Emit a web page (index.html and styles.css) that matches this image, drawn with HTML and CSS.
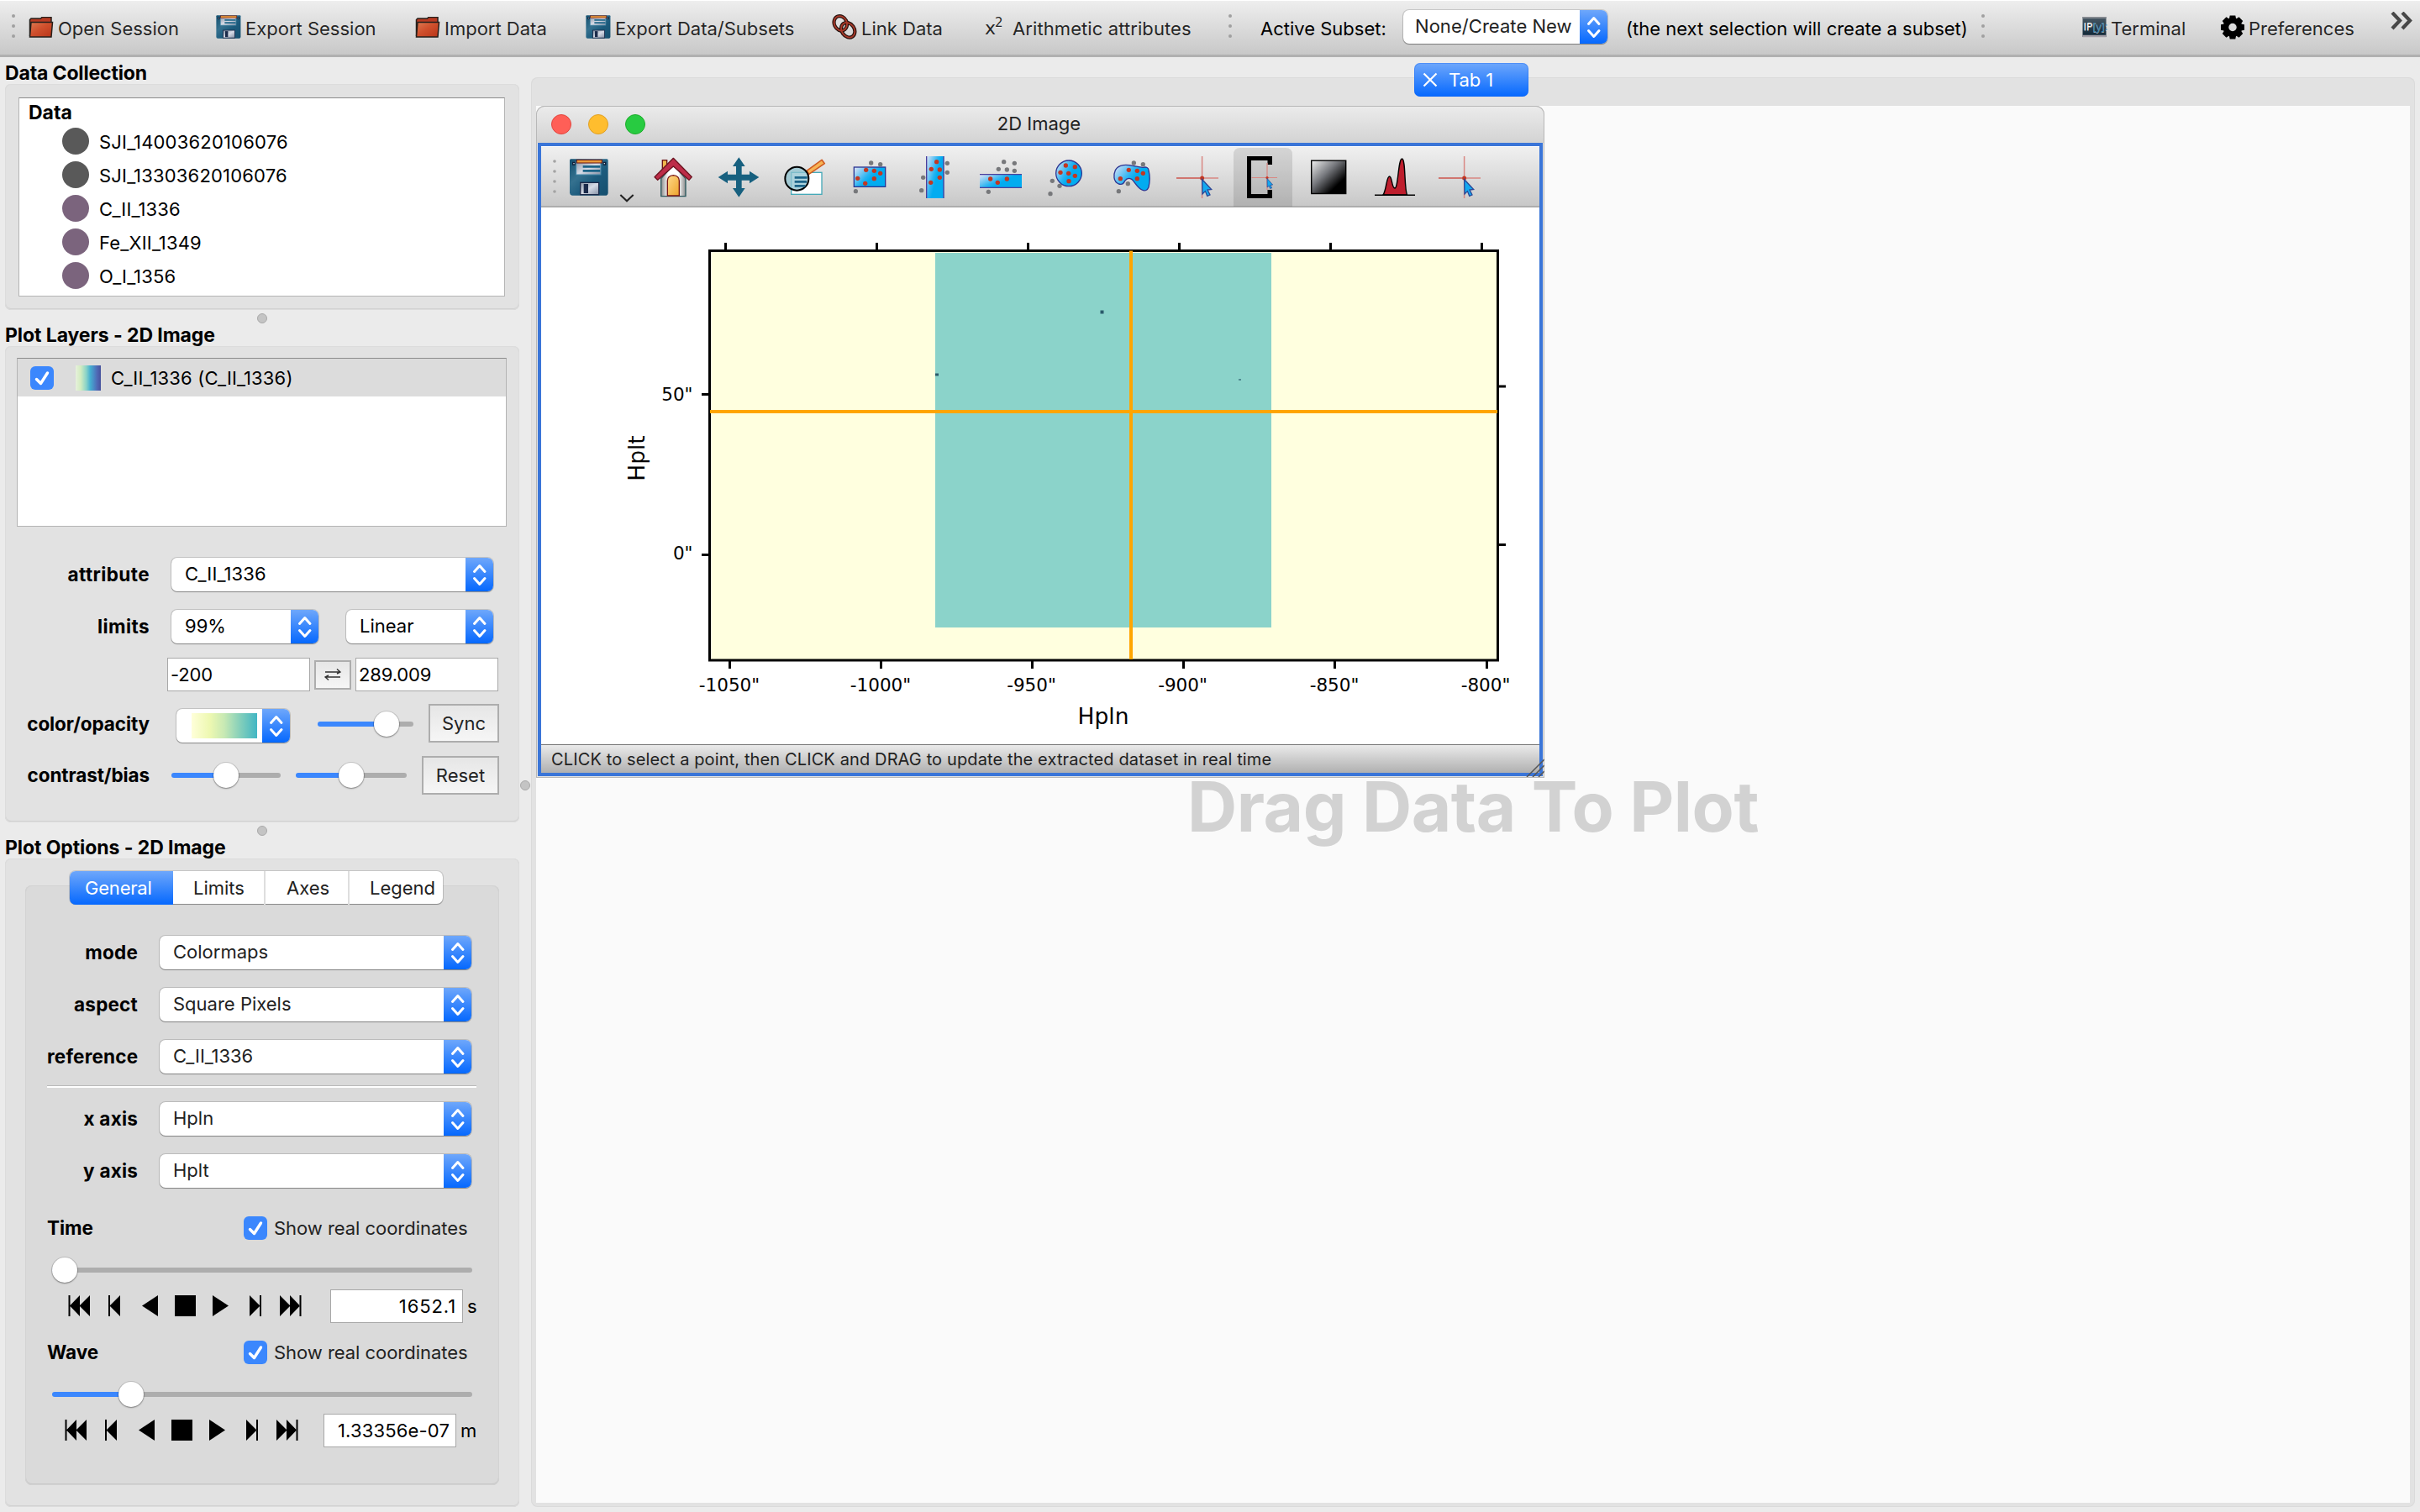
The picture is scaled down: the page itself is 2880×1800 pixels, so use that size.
FILE: index.html
```html
<!DOCTYPE html>
<html lang="en">
<head>
<meta charset="utf-8">
<title>Glue</title>
<link rel="stylesheet" href="styles.css">
</head>
<body>
<svg class="defs" width="0" height="0">
  <defs>
    <linearGradient id="g-folder" x1="0" y1="0" x2="1" y2="1"><stop offset="0" stop-color="#dd7a52"/><stop offset=".45" stop-color="#d0502d"/><stop offset="1" stop-color="#b83418"/></linearGradient>
    <linearGradient id="g-floppy" x1="0" y1="0" x2="1" y2="1"><stop offset="0" stop-color="#14506f"/><stop offset=".35" stop-color="#35718f"/><stop offset=".6" stop-color="#1c5b7d"/><stop offset="1" stop-color="#154f6e"/></linearGradient>
    <linearGradient id="g-metal" x1="0" y1="0" x2="1" y2="1"><stop offset="0" stop-color="#8d98a8"/><stop offset=".5" stop-color="#d6dbe6"/><stop offset="1" stop-color="#8490a4"/></linearGradient>
    <linearGradient id="g-gold" x1="0" y1="0" x2="1" y2="1"><stop offset="0" stop-color="#ffd98a"/><stop offset="1" stop-color="#eda32b"/></linearGradient>
    <linearGradient id="g-wall"><stop offset="0" stop-color="#8c8c8c"/><stop offset=".3" stop-color="#fff"/><stop offset=".7" stop-color="#fff"/><stop offset="1" stop-color="#8c8c8c"/></linearGradient>
    <linearGradient id="g-sel" x1="0" y1="0" x2="1" y2=".6"><stop offset="0" stop-color="#e6e4f5"/><stop offset=".5" stop-color="#29b4f2"/><stop offset=".65" stop-color="#02acf0"/><stop offset="1" stop-color="#02acf0"/></linearGradient>
    <linearGradient id="g-gray" x1="0" y1="0" x2="1" y2="1"><stop offset="0" stop-color="#f2f2f2"/><stop offset=".4" stop-color="#77797e"/><stop offset=".75" stop-color="#000"/></linearGradient>
    <linearGradient id="g-term" x1="0" y1="0" x2="0" y2="1"><stop offset="0" stop-color="#4a5a66"/><stop offset="1" stop-color="#0c2434"/></linearGradient>
    <symbol id="folder" viewBox="0 0 29 25">
      <path d="M1 23V3.500L2.500 2H14l1.500-1.500h11V9" fill="#b83a22" stroke="#26201c" stroke-width="1.500"/>
      <path d="M2.500 6.500h25.500L26.500 24H1z" fill="url(#g-folder)" stroke="#26201c" stroke-width="1.500"/>
    </symbol>
    <symbol id="floppy" viewBox="84 39 138 132">
      <path d="M88 40H217q4 0 4 5V162q-1 6-6 8H92q-7-2-8-9V45q0-5 4-5z" fill="url(#g-floppy)"/>
      <rect x="107" y="50" width="88" height="46" fill="url(#g-metal)" stroke="#3f87a8" stroke-width="3"/>
      <rect x="109" y="43" width="90" height="11" fill="#e89a3a" stroke="#6b1414" stroke-width="3"/>
      <path d="M131 63h62v8h-62zM131 78h62v8h-62z" fill="#1c6488"/>
      <path d="M93 50h11v12H93zM203 50h11v12h-11z" fill="#12233c"/>
      <path d="M97 54h4v4h-4zM206 54h4v4h-4z" fill="#cfd8e2"/>
      <rect x="122" y="124" width="66" height="43" fill="url(#g-metal)" stroke="#1b2a4a" stroke-width="4"/>
      <rect x="134" y="129" width="16" height="33" fill="#1b2a4a"/>
    </symbol>
    <symbol id="updown" viewBox="0 0 33 40">
      <path d="M10.500 16.500L16.800 9.500L23 16.500M10.500 24.500L16.800 31.500L23 24.500" fill="none" stroke="#fff" stroke-width="3" stroke-linecap="round" stroke-linejoin="round"/>
    </symbol>
    <symbol id="check" viewBox="0 0 28 28"><path d="M7.500 15.500L12.500 20.500L20.500 8" fill="none" stroke="#fff" stroke-width="3.400" stroke-linecap="round" stroke-linejoin="round"/></symbol>
    <symbol id="pick" viewBox="0 0 78 72">
      <path d="M44.600 12v50M14 38h50" stroke="#d98883" stroke-width="1.500"/><path d="M14 38h28" stroke="#cc6a63" stroke-width="1.500"/>
      <circle cx="44.600" cy="38" r="2.500" fill="#c23722"/>
      <path d="M44.600 39.500L55.700 51.500L51 52L54 58L50.700 59.300L48.400 53.600L45 57z" fill="#13a9f0" stroke="#2a4797" stroke-width="1.300"/>
    </symbol>
    <symbol id="first" viewBox="0 0 26 25"><path d="M.5 0h2v25h-2zM14 0v25L2 12.500zM26 0v25L13.500 12.500z"/></symbol>
    <symbol id="prev" viewBox="0 0 14 25"><path d="M0 0h2v25H0zM14 0v25L1.500 12.500z"/></symbol>
    <symbol id="back" viewBox="0 0 19 25"><path d="M19 0v25L0 12.500z"/></symbol>
    <symbol id="stop" viewBox="0 0 25 25"><path d="M0 0h25v25H0z"/></symbol>
    <symbol id="play" viewBox="0 0 19 25"><path d="M0 0v25L19 12.500z"/></symbol>
    <symbol id="next" viewBox="0 0 14 25"><path d="M12 0h2v25h-2zM0 0v25L12.500 12.500z"/></symbol>
    <symbol id="last" viewBox="0 0 26 25"><path d="M23.500 0h2v25h-2zM12 0v25L24 12.500zM0 0v25L12.500 12.500z"/></symbol>
  </defs>
</svg>

<header class="toolbar">
  <span class="grip"><i></i><i></i><i></i></span>
  <span class="action"><svg class="ic" width="29" height="25"><use href="#folder"/></svg>Open Session</span>
  <span class="action"><svg class="ic" width="30" height="28"><use href="#floppy"/></svg>Export Session</span>
  <span class="action"><svg class="ic" width="29" height="25"><use href="#folder"/></svg>Import Data</span>
  <span class="action"><svg class="ic" width="30" height="28"><use href="#floppy"/></svg>Export Data/Subsets</span>
  <span class="action"><svg class="ic" width="32" height="32" viewBox="0 0 32 32"><g fill="none"><g stroke="#26120e" stroke-width="4.500"><ellipse cx="11" cy="11.500" rx="8" ry="9.500" transform="rotate(-25 11 11.500)"/><ellipse cx="20.500" cy="20" rx="8" ry="10" transform="rotate(-35 20.500 20)"/></g><g stroke="#a8392a" stroke-width="2"><ellipse cx="11" cy="11.500" rx="8" ry="9.500" transform="rotate(-25 11 11.500)"/><ellipse cx="20.500" cy="20" rx="8" ry="10" transform="rotate(-35 20.500 20)"/></g></g></svg>Link Data</span>
  <span class="action wide"><span class="formula">x<sup>2</sup></span>Arithmetic attributes</span>
  <span class="grip"><i></i><i></i><i></i></span>
  <span class="plain">Active Subset:</span>
  <span class="combo top">None/Create New<b class="step"><svg width="33" height="40"><use href="#updown"/></svg></b></span>
  <span class="plain">(the next selection will create a subset)</span>
  <span class="grip"><i></i><i></i><i></i></span>
  <span class="action tight"><svg class="ic" width="29" height="25" viewBox="0 0 29 25"><rect width="28" height="24" fill="url(#g-term)"/><path d="M0 1h28" stroke="#84898f" stroke-width="2"/><path d="M0 23h28" stroke="#a5a0a8" stroke-width="2.500"/><text x="1" y="16" font-size="12.500" fill="#fff" font-family="Open Sans, sans-serif">IP<tspan fill="#3f86b0">[y]:</tspan></text></svg>Terminal</span>
  <span class="action tight"><svg class="ic" width="29" height="29" viewBox="-14.500 -14.500 29 29"><circle r="8" fill="none" stroke="#000" stroke-width="6.500"/><path d="M-3.300-14h6.600l1 5h-8.600zM-3.300 14h6.600l1-5h-8.600zM-14-3.300v6.600l5 1v-8.600zM14-3.300v6.600l-5 1v-8.600z"/><path transform="rotate(45)" d="M-3.300-14h6.600l1 5h-8.600zM-3.300 14h6.600l1-5h-8.600zM-14-3.300v6.600l5 1v-8.600zM14-3.300v6.600l-5 1v-8.600z"/></svg>Preferences</span>
  <span class="more"><svg width="28" height="22" viewBox="0 0 28 22"><path d="M2 1l9 9.500L2 20M14 1l9 9.500L14 20" fill="none" stroke="#484848" stroke-width="4.200"/></svg></span>
</header>

<div class="workspace">
<aside class="side">
  <h2 class="title first">Data Collection</h2>
  <section class="panel collection">
    <div class="tree">
      <div class="root">Data</div>
      <div class="leaf"><i class="dot gray"></i>SJI_14003620106076</div>
      <div class="leaf"><i class="dot gray"></i>SJI_13303620106076</div>
      <div class="leaf"><i class="dot"></i>C_II_1336</div>
      <div class="leaf"><i class="dot"></i>Fe_XII_1349</div>
      <div class="leaf"><i class="dot"></i>O_I_1356</div>
    </div>
  </section>
  <div class="split"><i></i></div>
  <h2 class="title">Plot Layers - 2D Image</h2>
  <section class="panel layers">
    <div class="layerlist">
      <div class="layer"><span class="cb"><svg width="28" height="28"><use href="#check"/></svg></span><i class="swatch"></i>C_II_1336 (C_II_1336)</div>
    </div>
    <div class="row"><label class="loose">attribute</label><span class="combo w383 list">C_II_1336<b class="step"><svg width="33" height="40"><use href="#updown"/></svg></b></span></div>
    <div class="row"><label class="loose">limits</label><span class="combo w175">99%<b class="step"><svg width="33" height="40"><use href="#updown"/></svg></b></span><span class="combo w175 second">Linear<b class="step"><svg width="33" height="40"><use href="#updown"/></svg></b></span></div>
    <div class="row range"><span class="input">-200</span><span class="button swap"><svg width="20" height="14" viewBox="0 0 20 14"><path d="M1 4h18M15 .5L19 4l-4 2M19 10H1M5 8l-4 2 4 3.500" fill="none" stroke="#333" stroke-width="1.400"/></svg></span><span class="input">289.009</span></div>
    <div class="row color"><label>color/opacity</label><span class="combo w135"><i class="cmap"></i><b class="step"><svg width="33" height="40"><use href="#updown"/></svg></b></span><span class="slider opacity"><i class="track" style="--p:72%"></i><i class="knob" style="--p:72%"></i></span><span class="button sync">Sync</span></div>
    <div class="row contrast"><label>contrast/bias</label><span class="slider c1"><i class="track" style="--p:50%"></i><i class="knob" style="--p:50%"></i></span><span class="slider c2"><i class="track" style="--p:50%"></i><i class="knob" style="--p:50%"></i></span><span class="button reset">Reset</span></div>
  </section>
  <div class="split"><i></i></div>
  <h2 class="title">Plot Options - 2D Image</h2>
  <section class="panel options">
    <nav class="tabs"><span class="on">General</span><span>Limits</span><span>Axes</span><span>Legend</span></nav>
    <div class="page">
      <div class="row"><label>mode</label><span class="combo w371">Colormaps<b class="step"><svg width="33" height="40"><use href="#updown"/></svg></b></span></div>
      <div class="row"><label>aspect</label><span class="combo w371">Square Pixels<b class="step"><svg width="33" height="40"><use href="#updown"/></svg></b></span></div>
      <div class="row"><label>reference</label><span class="combo w371">C_II_1336<b class="step"><svg width="33" height="40"><use href="#updown"/></svg></b></span></div>
      <hr>
      <div class="row"><label>x axis</label><span class="combo w371">Hpln<b class="step"><svg width="33" height="40"><use href="#updown"/></svg></b></span></div>
      <div class="row"><label>y axis</label><span class="combo w371">Hplt<b class="step"><svg width="33" height="40"><use href="#updown"/></svg></b></span></div>
      <div class="axis time">
        <div class="head"><strong>Time</strong><span class="cb"><svg width="28" height="28"><use href="#check"/></svg></span>Show real coordinates</div>
        <div class="slide"><span class="slider"><i class="track" style="--p:3%"></i><i class="knob" style="--p:3%"></i></span></div>
        <div class="transport">
          <span class="keys"><svg width="26" height="25"><use href="#first"/></svg><svg width="14" height="25"><use href="#prev"/></svg><svg width="19" height="25"><use href="#back"/></svg><svg width="25" height="25"><use href="#stop"/></svg><svg width="19" height="25"><use href="#play"/></svg><svg width="14" height="25"><use href="#next"/></svg><svg width="26" height="25"><use href="#last"/></svg></span>
          <span class="input num spaced">1652.1</span><span>s</span>
        </div>
      </div>
      <div class="axis wave">
        <div class="head"><strong>Wave</strong><span class="cb"><svg width="28" height="28"><use href="#check"/></svg></span>Show real coordinates</div>
        <div class="slide"><span class="slider"><i class="track" style="--p:18.800%"></i><i class="knob" style="--p:18.800%"></i></span></div>
        <div class="transport">
          <span class="keys"><svg width="26" height="25"><use href="#first"/></svg><svg width="14" height="25"><use href="#prev"/></svg><svg width="19" height="25"><use href="#back"/></svg><svg width="25" height="25"><use href="#stop"/></svg><svg width="19" height="25"><use href="#play"/></svg><svg width="14" height="25"><use href="#next"/></svg><svg width="26" height="25"><use href="#last"/></svg></span>
          <span class="input num">1.33356e-07</span><span>m</span>
        </div>
      </div>
    </div>
  </section>
</aside>
<div class="vsplit"><i></i></div>

<main class="main">
  <div class="tab"><svg width="18" height="18" viewBox="0 0 18 18"><path d="M1.500 1.500l15 15M16.500 1.500l-15 15" stroke="#fff" stroke-width="2.200"/></svg>Tab 1</div>
  <div class="mdi">
    <div class="canvas">
      <div class="hint">Drag Data To Plot</div>
      <div class="window">
        <div class="titlebar"><i class="light red"></i><i class="light yellow"></i><i class="light green"></i><span>2D Image</span></div>
        <div class="frame">
          <div class="tools">
            <svg width="118" height="72" viewBox="-18 -6 354 216"><g fill="#a3a3a3"><circle cx="30" cy="48" r="5.500"/><circle cx="30" cy="84" r="5.500"/><circle cx="30" cy="120" r="5.500"/><circle cx="30" cy="156" r="5.500"/></g><use href="#floppy" x="84" y="39" width="138" height="132"/><path d="M265 168L288 190L311 168" fill="none" stroke="#222" stroke-width="6"/></svg>
            <svg width="78" height="72" viewBox="336 -6 234 216"><rect x="415" y="44" width="16" height="40" fill="#f0b84e" stroke="#6b1414" stroke-width="4"/><path d="M410 110L454 62L498 110V173H410z" fill="url(#g-wall)" stroke="#2d5a60" stroke-width="4"/><path d="M433 171V118q0-18 21-20 21 2 21 20v53z" fill="url(#g-gold)" stroke="#7a1714" stroke-width="4"/><path d="M454 37L520 104L510 115L454 66L398 115L387 104z" fill="#bd2c48" stroke="#6b1420" stroke-width="4" stroke-linejoin="round"/></svg>
            <svg width="78" height="72" viewBox="570 -6 234 216"><path d="M688 34L710 66H698V95H726V83L760 105L726 127V116H698V144H710L688 176L666 144H678V116H648V127L614 105L648 83V95H678V66H666z" fill="#17607f"/></svg>
            <svg width="78" height="72" viewBox="804 -6 234 216"><rect x="875" y="88" width="109" height="78" fill="#fff" stroke="#45a9b8" stroke-width="4"/><path d="M930 82L984 43L994 56L938 94z" fill="#f7b355" stroke="#cf5b22" stroke-width="5" stroke-linejoin="round"/><circle cx="895" cy="110" r="42" fill="#8fc3d0" fill-opacity=".75" stroke="#000" stroke-width="6"/><path d="M887 102h45v8h-45zM887 117h43v8h-43zM887 132h38v8h-38z" fill="#1c6488"/></svg>
            <svg width="78" height="72" viewBox="-12 -6 234 216"><rect x="49" y="69" width="112" height="70" fill="url(#g-sel)" stroke="#2b3592" stroke-width="4"/><g fill="#c23722"><circle cx="92" cy="79" r="8"/><circle cx="121" cy="82" r="8"/><circle cx="143" cy="91" r="8"/><circle cx="62" cy="109" r="8"/><circle cx="121" cy="110" r="8"/><circle cx="89" cy="127" r="8"/></g><g fill="#77787b"><circle cx="110" cy="54" r="8"/><circle cx="143" cy="59" r="8"/><circle cx="55" cy="155" r="8"/></g></svg>
            <svg width="78" height="72" viewBox="222 -6 234 216"><rect x="307" y="30" width="63" height="150" fill="url(#g-sel)"/><path d="M308 30V180M369 30V180" stroke="#4a3f9c" stroke-width="4"/><g fill="#c23722"><circle cx="344" cy="50" r="8"/><circle cx="325" cy="76" r="8"/><circle cx="355" cy="78" r="8"/><circle cx="355" cy="106" r="8"/><circle cx="323" cy="124" r="8"/></g><g fill="#77787b"><circle cx="382" cy="55" r="8"/><circle cx="382" cy="88" r="8"/><circle cx="296" cy="106" r="8"/><circle cx="290" cy="152" r="8"/></g></svg>
            <svg width="78" height="72" viewBox="456 -6 234 216"><rect x="498" y="95" width="150" height="47" fill="url(#g-sel)"/><path d="M498 95H648M498 142H648" stroke="#4a3f9c" stroke-width="4"/><g fill="#c23722"><circle cx="536" cy="111" r="8"/><circle cx="562" cy="124" r="8"/><circle cx="595" cy="111" r="8"/></g><g fill="#77787b"><circle cx="584" cy="50" r="8"/><circle cx="622" cy="55" r="8"/><circle cx="565" cy="76" r="8"/><circle cx="595" cy="78" r="8"/><circle cx="622" cy="82" r="8"/><circle cx="529" cy="157" r="8"/></g></svg>
            <svg width="78" height="72" viewBox="690 -6 234 216"><circle cx="816" cy="91" r="46" fill="url(#g-sel)" stroke="#2b3592" stroke-width="4"/><g fill="#c23722"><circle cx="805" cy="63" r="8"/><circle cx="838" cy="68" r="8"/><circle cx="786" cy="88" r="8"/><circle cx="815" cy="91" r="8"/><circle cx="838" cy="100" r="8"/><circle cx="816" cy="119" r="8"/></g><g fill="#77787b"><circle cx="757" cy="118" r="8"/><circle cx="783" cy="136" r="8"/><circle cx="750" cy="164" r="8"/></g></svg>
            <svg width="78" height="72" viewBox="924 -6 234 216"><path d="M1010 62C1035 58 1050 68 1080 70Q1100 66 1101 80Q1108 110 1101 140Q1094 158 1077 150C1060 142 1052 122 1040 112Q1026 104 1016 118Q1010 134 994 129C974 120 975 95 982 80Q990 65 1010 62z" fill="url(#g-sel)" stroke="#2b3592" stroke-width="4"/><g fill="#c23722"><circle cx="1030" cy="79" r="8"/><circle cx="1060" cy="82" r="8"/><circle cx="1081" cy="91" r="8"/><circle cx="1000" cy="110" r="8"/><circle cx="1060" cy="110" r="8"/></g><g fill="#77787b"><circle cx="1048" cy="54" r="8"/><circle cx="1081" cy="59" r="8"/><circle cx="1027" cy="128" r="8"/><circle cx="994" cy="155" r="8"/></g></svg>
            <svg width="78" height="72"><use href="#pick"/></svg>
            <svg width="78" height="72" viewBox="0 0 78 72"><path d="M4 72V10q0-8 8-8H66q8 0 8 8V72z" fill="#000" fill-opacity=".11"/><path d="M50 22h-5.500v-5H25v40h19.500v-5H50v10H20V12h30z"/><path d="M44 20v32M25.500 37.500H56" stroke="#d98883" stroke-width="1.200"/><circle cx="44" cy="37.500" r="1.600" fill="#c23722"/><path d="M44 38.500L50.600 46L47.800 46.400L49.600 49.800L47.600 50.400L46.200 47.200L44.200 49z" fill="#13a9f0" stroke="#2a4797" stroke-width=".8"/></svg>
            <svg width="78" height="72" viewBox="0 0 78 72"><rect x="18.700" y="17.200" width="41" height="39.300" fill="url(#g-gray)" stroke="#000" stroke-width="1.400"/></svg>
            <svg width="78" height="72" viewBox="0 0 78 72"><path d="M26 58C30 52 30 36 33.500 36S36 50 40 50S44 15 48.500 15S51 50 54.500 58z" fill="#be1e2d" stroke="#000" stroke-width="1.400"/><path d="M16 58.300H64" stroke="#000" stroke-width="1.600"/></svg>
            <svg width="78" height="72"><use href="#pick"/></svg>
          </div>
          <svg class="plot" width="1188" height="639" viewBox="644 247 1188 639">
            <rect x="845" y="299" width="937" height="487" fill="#ffffdf"/>
            <rect x="1113" y="301" width="400" height="446" fill="#8bd3ca"/>
            <g fill="#2a5a6a"><rect x="1309.500" y="369.500" width="4" height="4"/><rect x="1113" y="444.500" width="4" height="3"/><rect x="1474" y="451" width="3" height="2" opacity=".6"/></g>
            <rect x="844.500" y="298.500" width="938" height="487.500" fill="none" stroke="#000" stroke-width="3"/>
            <path d="M863.500 289v9M1043.500 289v9M1223.500 289v9M1403.500 289v9M1583.500 289v9M1763.500 289v9M868.500 787v9M1048.500 787v9M1228.500 787v9M1408.500 787v9M1588.500 787v9M1769.500 787v9M835 469.500h9M835 660.500h9M1784 460h8M1784 648.500h8" stroke="#000" stroke-width="3"/>
            <path d="M845 490H1782M1346 298.500V785" stroke="#ffa500" stroke-width="4"/>
            <g class="ticks" text-anchor="middle"><text x="868" y="822.500">-1050"</text><text x="1048" y="822.500">-1000"</text><text x="1227.500" y="822.500">-950"</text><text x="1407.500" y="822.500">-900"</text><text x="1588" y="822.500">-850"</text><text x="1768" y="822.500">-800"</text></g>
            <g class="ticks" text-anchor="end"><text x="824.500" y="476.500">50"</text><text x="824.500" y="665.500">0"</text></g>
            <text class="axname" x="1313" y="862" text-anchor="middle">Hpln</text>
            <text class="axname" transform="translate(767 545.500) rotate(-90)" text-anchor="middle">Hplt</text>
          </svg>
          <div class="status">CLICK to select a point, then CLICK and DRAG to update the extracted dataset in real time</div>
        </div>
        <svg class="resize" width="22" height="22" viewBox="0 0 22 22"><path d="M1 22L22 1M8 22L22 8M15 22L22 15" stroke="#555" stroke-width="1.500"/></svg>
      </div>
    </div>
  </div>
</main>
</div>
</body>
</html>
```
FILE: styles.css
```css
* { box-sizing: border-box; }
body {
  margin: 0; width: 2880px; height: 1800px; overflow: hidden;
  background: #ebebeb; color: #000;
  font: 400 22px/28px Inter, "Liberation Sans", sans-serif;
  display: flex; flex-direction: column; white-space: nowrap;
}
svg { display: block; flex: none; }
i { display: block; flex: none; }
.defs { position: absolute; }

/* application toolbar */
.toolbar {
  flex: none; height: 68px; border-bottom: 3px solid #b0b0b0;
  background: linear-gradient(#fff 0 1px, #eee 1px, #c8c8c8);
  display: grid; align-items: center;
  grid-template-columns: 34px 223px 237px 203px 293px 182px 289px 39px 170px 265px 422px 121px 164px 203px 35px;
}
.action { display: flex; align-items: center; gap: 5px; color: #262626; padding-top: 2px; text-shadow: 0 1px 0 rgba(255,255,255,.5); }
.action.tight { gap: 4px; }
.action.wide { letter-spacing: .09px; }
.action .ic { width: 30px; margin-top: -3px; }
.plain { padding-top: 2px; }
.formula { width: 28px; font-family: "DejaVu Sans", sans-serif; font-size: 22px; letter-spacing: -1px; }
.formula sup { font-size: 15px; line-height: 0; vertical-align: 9px; }
.grip { display: flex; flex-direction: column; gap: 8px; padding-left: 14px; margin-top: -4px; }
.grip i { width: 4px; height: 4px; border-radius: 50%; background: #a0a0a0; }
.grip:nth-of-type(n+2) { padding-left: 1px; }
.more { margin-top: -16px; }

/* shared controls */
.combo {
  display: flex; align-items: center; flex: none; height: 40px; padding: 0 0 2px 16px; color: #222;
  background: #fff; border-radius: 7px; position: relative;
  box-shadow: 0 0 0 1px rgba(0,0,0,.14), 0 1px 1px rgba(0,0,0,.3);
}
.layers .combo { color: #000; }
.step {
  position: absolute; right: 0; top: 0; height: 40px; width: 33px;
  background: linear-gradient(#6ea7fb, #0568fe); border-radius: 0 7px 7px 0;
}
.combo.top { width: 243px; margin-top: -1px; padding-left: 14px; letter-spacing: .05px; }
.w383 { width: 383px; } .w175 { width: 175px; } .w135 { width: 135px; } .w371 { width: 371px; }
.combo.list, .tree, .layer { letter-spacing: .19px; }
.input {
  display: block; flex: none; width: 170px; height: 40px; padding: 0 3px; line-height: 38px; letter-spacing: -.15px;
  background: #fff; border: 1px solid #a8a8a8;
}
.button {
  display: flex; align-items: center; justify-content: center; flex: none; color: #222;
  background: linear-gradient(#e6e6e6, #f6f6f6); border: 2px solid #adadad;
}
.cb { flex: none; width: 28px; height: 28px; border-radius: 6px; background: #3b87fd; }
.slider { position: relative; display: flex; align-items: center; flex: none; height: 30px; }
.track { width: 100%; height: 6px; border-radius: 3px; background: linear-gradient(to right, #3b87fd var(--p), #adadad var(--p)); }
.knob {
  position: absolute; left: calc(var(--p) - 15px); top: 0; width: 30px; height: 30px; border-radius: 50%;
  background: #fff; box-shadow: 0 0 0 1px rgba(0,0,0,.12), 0 1px 2px rgba(0,0,0,.35);
}

/* sidebar */
.workspace { flex: 1; display: flex; min-height: 0; }
.side { width: 618px; padding-left: 6px; flex: none; }
.title { margin: 0; height: 23px; font: 700 23px/21px Inter, sans-serif; letter-spacing: -.08px; }
.title.first { height: 32px; line-height: 39px; letter-spacing: -.15px; }
.panel { background: #e2e2e2; border-radius: 7px; box-shadow: inset 0 0 0 1px #dcdcdc, inset 0 -1px 0 1px #d2d2d2; }
.collection { height: 269px; padding: 16px 17px 0 16px; }
.tree { height: 237px; background: #fff; border: 1px solid #b4b4b4; border-top-color: #8c8c8c; padding-top: 1px; }
.root { height: 31px; padding-left: 11px; font: 700 23px/32px Inter, sans-serif; letter-spacing: 0; }
.leaf { height: 40px; display: flex; align-items: center; padding-left: 51px; gap: 12px; }
.dot { width: 32px; height: 32px; border-radius: 50%; background: #7b647d; margin-top: -2px; }
.dot.gray { background: #595959; }
.split { height: 20px; display: flex; justify-content: center; align-items: center; }
.split i, .vsplit i { width: 12px; height: 12px; border-radius: 50%; background: #c4c4c4; border: 1px solid #aaa; }
.vsplit { width: 14px; flex: none; padding: 861px 0 0 1px; }

.layers { height: 567px; padding-top: 14px; }
.layerlist { height: 201px; margin: 0 15px 26px 14px; background: #fff; border: 1px solid #b4b4b4; border-top-color: #8c8c8c; }
.layer { height: 45px; background: #dcdcdc; display: flex; align-items: center; padding-left: 15px; padding-top: 1px; }
.swatch { width: 30px; height: 30px; margin: 0 12px 0 26px; background: linear-gradient(to right, #e6f1dc, #d3ecc0 20%, #8bd3c8 42%, #45b0d0 58%, #4a86c4 74%, #5068b4 86%, #46529c); }
.row { height: 62px; display: flex; align-items: center; }
label { flex: none; width: 172px; margin-right: 26px; text-align: right; font-weight: 700; font-size: 22.500px; letter-spacing: -.1px; }
label.loose { letter-spacing: .4px; }
.second { margin-left: 33px; }
.range { height: 52px; padding-left: 193px; }
.swap { width: 44px; height: 35px; margin: 0 5px; }
.color { height: 66px; }
.color label { margin-right: 32px; }
.color .combo { padding-left: 18px; margin-top: 4px; }
.cmap { width: 78px; height: 30px; margin-top: 1px; background: linear-gradient(to right, #ffffd9, #edf8b1 28%, #c7e9b4 50%, #7fcdbb 76%, #41b6c4); }
.opacity { width: 114px; margin: 0 18px 0 33px; }
.sync { width: 84px; height: 46px; margin-top: -2px; }
.contrast { height: 56px; }
.c1 { width: 130px; }
.c2 { width: 132px; margin: 0 18px; }
.reset { width: 92px; height: 46px; }

.options { height: 772px; padding: 15px 24px 0; }
.tabs {
  position: relative; z-index: 1; width: 444px; height: 39px; margin: 0 0 -22px 53px; display: grid;
  grid-template-columns: 123px 108px 100px 113px; background: #fff; border-radius: 7px;
  box-shadow: 0 0 0 1px rgba(0,0,0,.12), 0 1px 1px rgba(0,0,0,.3);
}
.tabs span { line-height: 40px; color: #222; padding-left: 23px; border-left: 2px solid #dedede; }
.tabs span:nth-child(-n+2) { border-left: 0; }
.tabs span:nth-child(2) { padding-left: 24px; }
.tabs span:nth-child(3) { padding-left: 25px; }
.tabs .on { color: #fff; height: 40px; padding-left: 18px; letter-spacing: -.2px; background: linear-gradient(#6ea7fb, #0568fe); border-radius: 7px 0 0 7px; }
.tabs span:nth-child(4) { padding-left: 24px; }
.page { height: 714px; padding: 49px 26px 0; background: #dadada; border-radius: 8px; box-shadow: inset 0 0 0 1px #d3d3d3, inset 0 -1px 0 1px #c8c8c8; }
.page label { width: 108px; letter-spacing: .2px; }
hr { margin: 3px 0 6px; height: 3px; border: 0; border-top: 1px solid #b8b8b8; background: #fff; width: 511px; }
.axis { margin-top: 8px; width: 520px; }
.axis.time { margin-top: 10px; }
.head { height: 54px; display: flex; align-items: center; color: #222; letter-spacing: -.04px; }
.head strong { width: 234px; font-weight: 700; font-size: 22.500px; color: #000; }
.head .cb { margin-right: 8px; }
.slide { height: 46px; padding: 8px 0 0 6px; }
.slide .slider { width: 500px; }
.transport { height: 40px; display: flex; align-items: center; }
.keys { display: grid; grid-template-columns: 48px 40px 39px 45px 44px 36px 26px; margin: -2px 34px 0 25px; }
.wave .keys { margin-left: 21px; margin-right: 30px; }
.num { width: 158px; text-align: right; padding-right: 7px; margin-right: 5px; letter-spacing: .15px; }
.num.spaced { letter-spacing: .9px; }

/* tab area and canvas */
.main { flex: 1; margin-right: 6px; padding-top: 7px; }
.tab {
  position: relative; z-index: 1; width: 136px; height: 40px; margin: 0 0 -23px 1051px; padding: 0 0 0 10px;
  display: flex; align-items: center; gap: 13px; color: #fff; border-radius: 7px; letter-spacing: -.1px;
  background: linear-gradient(#6ea7fb, #0568fe); box-shadow: inset 0 0 0 1px rgba(20,100,240,.35);
}
.mdi { height: 1702px; padding: 34px 6px 5px; background: #e2e2e2; border-radius: 8px; box-shadow: inset 0 0 0 1px #dadada; }
.canvas { position: relative; height: 1663px; background: #fafafa; display: flex; align-items: center; justify-content: center; }
.hint { font: 700 82px/100px Inter, sans-serif; letter-spacing: -.5px; color: #d2d2d2; padding-top: 7px; }

/* plot window */
.window {
  position: absolute; left: 0; top: 0; width: 1200px; height: 800px; padding: 0 2px 2px;
  display: flex; flex-direction: column; background: #e4e4e4; border-radius: 10px 10px 0 0;
  box-shadow: inset 0 0 0 1px #b8b8b8;
}
.titlebar {
  flex: none; height: 44px; margin: 0 -2px; padding: 0 17px 1px; position: relative; display: flex; align-items: center; gap: 20px;
  background: linear-gradient(#ebebeb, #d3d3d3); border: 1px solid #b8b8b8; border-bottom: 0; border-radius: 10px 10px 0 0;
}
.titlebar span { position: absolute; inset: 0 3px 0 0; line-height: 40px; text-align: center; color: #222; }
.light { width: 24px; height: 24px; border-radius: 50%; }
.red { background: #ff5f57; border: 1px solid #e2463f; }
.yellow { background: #ffbd2e; border: 1px solid #e0a023; }
.green { background: #28cb41; border: 1px solid #1dad2b; }
.frame { flex: 1; border: 4px solid #3a75d8; display: flex; flex-direction: column; min-height: 0; }
.tools { flex: none; display: flex; height: 73px; background: linear-gradient(#fff 0 1px, #f0f0f0 1px, #c8c8c8); border-bottom: 2px solid #adadad; }
.plot { background: #fff; }
.ticks { font: 21.500px "DejaVu Sans", sans-serif; }
.axname { font: 26.500px "DejaVu Sans", sans-serif; }
.status {
  flex: none; height: 34px; padding-left: 12px; border-top: 1px solid #777; font-size: 20px; line-height: 35px; letter-spacing: .12px; color: #222;
  background: linear-gradient(#eaeaea, #b0b0b0);
}
.resize { position: absolute; right: 0; bottom: 1px; }
```
